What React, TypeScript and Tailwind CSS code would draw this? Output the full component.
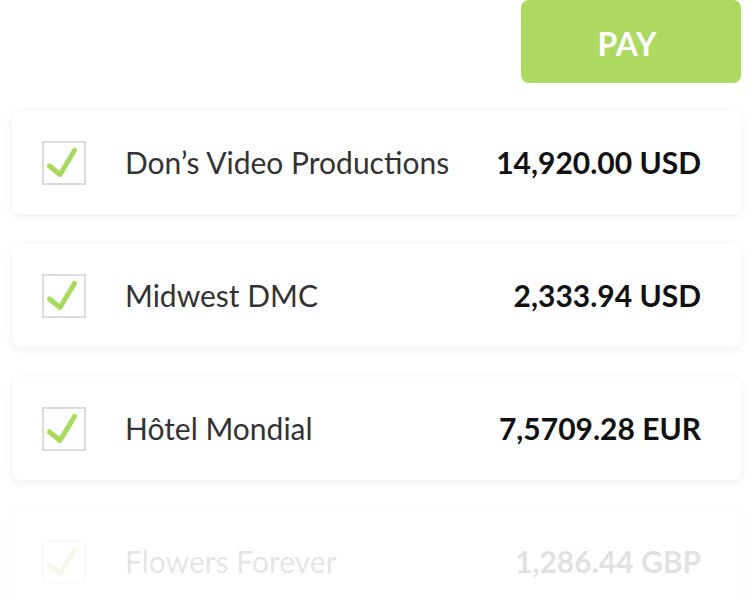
const ROWS = [
  { name: 'Don’s Video Productions', amount: '14,920.00 USD', faded: false },
  { name: 'Midwest DMC', amount: '2,333.94 USD', faded: false },
  { name: 'Hôtel Mondial', amount: '7,5709.28 EUR', faded: false },
  { name: 'Flowers Forever', amount: '1,286.44 GBP', faded: true },
];

function Check() {
  return (
    <div className="flex h-[44px] w-[44px] shrink-0 items-center justify-center border-2 border-[#dcdcdc] bg-white">
      <svg width="44" height="44" viewBox="0 0 44 44" className="-m-[2px]">
        <path
          d="M7.5 25 L18 33.5 L32.5 9.5"
          fill="none"
          stroke="#a8da5c"
          strokeWidth="5"
          strokeLinecap="round"
          strokeLinejoin="round"
        />
      </svg>
    </div>
  );
}

export default function App() {
  return (
    <div className="h-[601px] w-[753px] overflow-hidden bg-white px-[12px] font-['Lato',sans-serif]">
      <div className="flex justify-end">
        <button
          type="button"
          className="flex h-[83px] w-[220px] items-center justify-center rounded-[8px] bg-[#acd960] pr-[8px] pt-[4px] text-[32px] font-bold text-white"
        >
          PAY
        </button>
      </div>

      <div className="mt-[28px] flex flex-col gap-[30px]">
        {ROWS.map((r) => (
          <div
            key={r.name}
            className={`flex h-[103px] shrink-0 items-center rounded-[8px] bg-white pl-[30px] pr-[40px] shadow-[0_2px_10px_rgba(0,0,0,0.07)] ${
              r.faded ? 'opacity-[0.12]' : ''
            }`}
          >
            <Check />
            <span className="ml-[39px] flex-1 text-[30px] text-[#333333]">{r.name}</span>
            <span className="text-[30px] font-bold text-[#111111]">{r.amount}</span>
          </div>
        ))}
      </div>
    </div>
  );
}
